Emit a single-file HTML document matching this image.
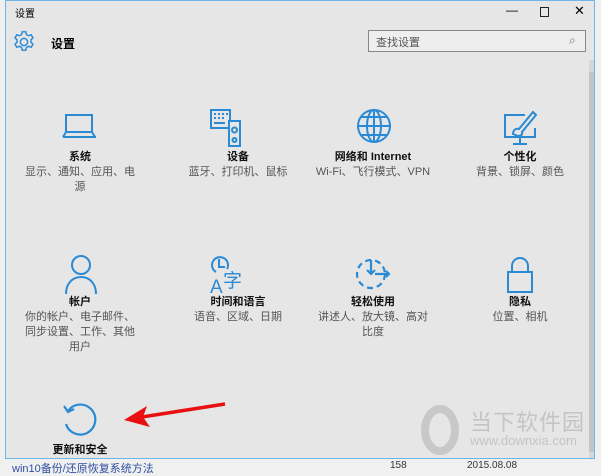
<!DOCTYPE html>
<html><head><meta charset="utf-8"><style>
body{margin:0;width:601px;height:470px;background:#f0f0f0;position:relative;overflow:hidden;font-family:"Liberation Sans","Noto Sans CJK SC",sans-serif;}
.win{position:absolute;left:5px;top:0;width:590px;height:459px;background:#e6e6e6;border:1px solid #6fb6e8;box-sizing:border-box;}
.t{position:absolute;font-size:11px;color:#000;}
.item{position:absolute;width:130px;text-align:center;font-size:11px;line-height:15px;}
.item b{display:block;font-weight:bold;color:#111;}
.item span{color:#555;}
svg.i{position:absolute;}
</style></head><body>
<div class="win"></div>
<div class="t" style="left:15px;top:5px;font-size:10px">设置</div>
<div class="t" style="left:506px;top:3px;font-size:12px">—</div>
<div style="position:absolute;left:540px;top:7px;width:7px;height:8px;border:1px solid #222"></div>
<div class="t" style="left:574px;top:3px;font-size:13px">✕</div>
<svg class="i" style="left:12px;top:30px" width="24" height="24" viewBox="0 0 20 20"><g fill="none" stroke="#2a8ad4" stroke-width="1.2"><circle cx="10" cy="10" r="3"/><path d="M8.5 1.5h3l.5 2.3 1.8 1 2.2-.8 1.5 2.6-1.7 1.6v2l1.7 1.6-1.5 2.6-2.2-.8-1.8 1-.5 2.3h-3l-.5-2.3-1.8-1-2.2.8-1.5-2.6 1.7-1.6v-2L2.5 6.6 4 4l2.2.8 1.8-1z"/></g></svg>
<div class="t" style="left:51px;top:35px;font-size:12px;font-weight:bold">设置</div>
<div style="position:absolute;left:368px;top:30px;width:218px;height:22px;border:1px solid #888;background:#eee;box-sizing:border-box;"></div>
<div class="t" style="left:376px;top:34px;color:#555">查找设置</div>
<div class="t" style="left:569px;top:33px;color:#777;font-size:12px">⌕</div>
<div style="position:absolute;left:589px;top:60px;width:5px;height:398px;background:#d6d6d6"></div>
<div style="position:absolute;left:589px;top:72px;width:5px;height:380px;background:#c4c4c4"></div>

<svg class="i" style="left:62px;top:113px" width="36" height="26"><g fill="none" stroke="#2a8ad4" stroke-width="2"><rect x="4" y="2" width="26" height="17"/><path d="M1 24h33"/><path d="M4 19l-3 5M30 19l3 5"/></g></svg>
<svg class="i" style="left:210px;top:108px" width="36" height="40"><g fill="none" stroke="#2a8ad4" stroke-width="2"><path d="M20 12V2H1v18h18"/><rect x="19" y="13" width="11" height="25"/><circle cx="24.5" cy="22" r="2.5"/><circle cx="24.5" cy="32" r="2"/></g><g fill="#2a8ad4"><rect x="4" y="5" width="2" height="2"/><rect x="8" y="5" width="2" height="2"/><rect x="12" y="5" width="2" height="2"/><rect x="16" y="5" width="2" height="2"/><rect x="4" y="9" width="2" height="2"/><rect x="8" y="9" width="2" height="2"/><rect x="12" y="9" width="2" height="2"/><rect x="4" y="14" width="11" height="2"/></g></svg>
<svg class="i" style="left:356px;top:108px" width="36" height="36"><g fill="none" stroke="#2a8ad4" stroke-width="2"><circle cx="18" cy="18" r="16"/><ellipse cx="18" cy="18" rx="7" ry="16"/><path d="M2 18h32M5 9h26M5 27h26M18 2v32"/></g></svg>
<svg class="i" style="left:503px;top:108px" width="36" height="38"><g fill="none" stroke="#2a8ad4" stroke-width="2"><path d="M22 7H2v22h30V20"/><path d="M17 29v6M10 36h14"/><path d="M10 26c0-4 3-6 6-5l14-17 3 3-14 17c1 3-2 4-4 4z"/></g></svg>

<svg class="i" style="left:64px;top:254px" width="34" height="40"><g fill="none" stroke="#2a8ad4" stroke-width="2"><circle cx="17" cy="11" r="9"/><path d="M2 40c0-10 6-17 15-17s15 7 15 17"/></g></svg>
<svg class="i" style="left:210px;top:254px" width="40" height="40"><g fill="none" stroke="#2a8ad4" stroke-width="2"><path d="M17 15A8 8 0 1 0 6 18"/><path d="M9 5v8h6"/></g><text x="0" y="39" font-size="19" fill="#2a8ad4" font-family="Liberation Sans">A</text><text x="13" y="33" font-size="19" fill="#2a8ad4" font-family="Noto Sans CJK SC,sans-serif">字</text></svg>
<svg class="i" style="left:355px;top:256px" width="40" height="36"><g fill="none" stroke="#2a8ad4" stroke-width="2.2"><circle cx="16" cy="18" r="14" stroke-dasharray="6 4"/><path d="M16 4v14M12 14l4 4 4-4M20 18h14M31 15l3 3-3 3"/></g></svg>
<svg class="i" style="left:506px;top:256px" width="28" height="38"><g fill="none" stroke="#2a8ad4" stroke-width="2"><path d="M6 16V10a8 8 0 0 1 16 0v6"/><rect x="2" y="16" width="24" height="20"/></g></svg>

<svg class="i" style="left:62px;top:402px" width="40" height="36"><g fill="none" stroke="#2a8ad4" stroke-width="2.2"><path d="M6 9A15 15 0 1 1 4 22"/><path d="M2 4l4 6 6-3"/></g></svg>

<div class="item" style="left:15px;top:150px"><b>系统</b><span>显示、通知、应用、电<br>源</span></div>
<div class="item" style="left:173px;top:150px"><b>设备</b><span>蓝牙、打印机、鼠标</span></div>
<div class="item" style="left:308px;top:150px;width:130px"><b>网络和 Internet</b><span>Wi-Fi、飞行模式、VPN</span></div>
<div class="item" style="left:455px;top:150px"><b>个性化</b><span>背景、锁屏、颜色</span></div>
<div class="item" style="left:15px;top:295px"><b>帐户</b><span>你的帐户、电子邮件、<br>同步设置、工作、其他<br>用户</span></div>
<div class="item" style="left:173px;top:295px"><b>时间和语言</b><span>语音、区域、日期</span></div>
<div class="item" style="left:308px;top:295px"><b>轻松使用</b><span>讲述人、放大镜、高对<br>比度</span></div>
<div class="item" style="left:455px;top:295px"><b>隐私</b><span>位置、相机</span></div>
<div class="item" style="left:15px;top:443px"><b>更新和安全</b></div>

<svg class="i" style="left:120px;top:400px" width="110" height="30"><path d="M105 4L22 17" stroke="#e81010" stroke-width="3.5" fill="none"/><path d="M4 20L27 6 23 17 30 27z" fill="#e81010"/></svg>

<svg class="i" style="left:415px;top:402px" width="50" height="55"><g fill="none" stroke="#c8c8c8" stroke-width="8"><ellipse cx="25" cy="28" rx="15" ry="21"/></g></svg>
<div class="t" style="left:470px;top:405px;font-size:22px;color:#c4c4c4;letter-spacing:1px">当下软件园</div>
<div class="t" style="left:470px;top:433px;font-size:13px;color:#c4c4c4">www.downxia.com</div>

<div class="t" style="left:12px;top:460px;font-size:11px;color:#2e4fa0">win10备份/还原恢复系统方法</div>
<div class="t" style="left:390px;top:460px;font-size:10px;color:#333">158</div>
<div class="t" style="left:467px;top:460px;font-size:10px;color:#333">2015.08.08</div>
</body></html>
